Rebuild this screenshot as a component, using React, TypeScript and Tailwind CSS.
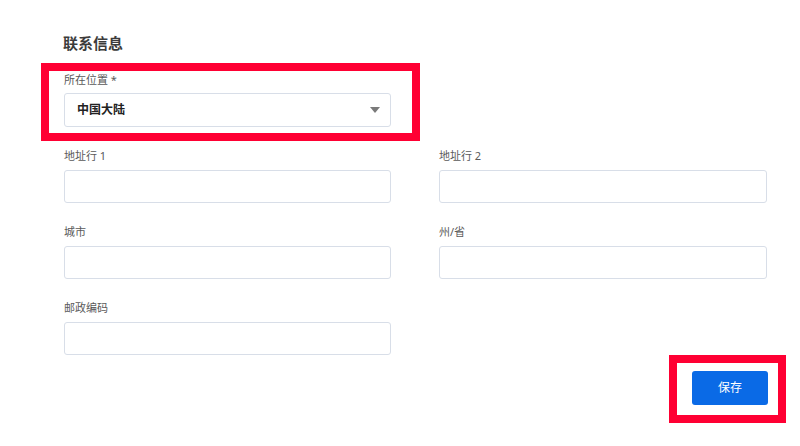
const font = { fontFamily: '"Noto Sans", "Noto Sans CJK SC", sans-serif' };

function Field({ label }: { label: string }) {
  return (
    <div className="flex flex-col">
      <label className="text-[11px] leading-4 text-[#5a5a5a]">{label}</label>
      <input
        type="text"
        className="mt-[6px] h-[33px] w-full rounded-[3px] border border-[#d8dee8] bg-white px-3 text-[12px] outline-none"
      />
    </div>
  );
}

export default function App() {
  return (
    <div className="h-[446px] w-[800px] overflow-hidden bg-white" style={font}>
      <div className="pt-[33px]">
        {/* 联系信息 */}
        <h2 className="pl-[63px] text-[15px] font-bold leading-5 text-[#3b3b3b]">联系信息</h2>

        {/* 所在位置 (highlighted) */}
        <div className="ml-[41px] mt-[10px] w-[379px] border-[8px] border-[#ff0033] pb-[6px] pl-[15px] pr-[21px] pt-[1px]">
          <label className="block text-[11px] leading-4 text-[#5a5a5a]">所在位置 *</label>
          <div className="mt-[5px] flex h-[34px] items-center justify-between rounded-[3px] border border-[#d8dee8] bg-white pl-[12px] pr-[10px]">
            <span className="text-[12px] font-semibold text-[#222]">中国大陆</span>
            <svg width="10" height="6" viewBox="0 0 10 6">
              <path d="M0 0 L10 0 L5 6 Z" fill="#7a7a7a" />
            </svg>
          </div>
        </div>

        {/* address grid */}
        <div className="mt-[7px] grid grid-cols-[327px_328px] gap-x-[48px] gap-y-[21px] pl-[64px]">
          <Field label="地址行 1" />
          <Field label="地址行 2" />
          <Field label="城市" />
          <Field label="州/省" />
          <Field label="邮政编码" />
        </div>

        {/* 保存 (highlighted) */}
        <div className="flex justify-end pr-[14px]">
          <div className="border-[8px] border-[#ff0033] pb-[10px] pl-[15px] pr-[10px] pt-[8px]">
            <button className="h-[34px] w-[76px] rounded-[3px] bg-[#0a6ae6] text-[12px] text-white">保存</button>
          </div>
        </div>
      </div>
    </div>
  );
}
